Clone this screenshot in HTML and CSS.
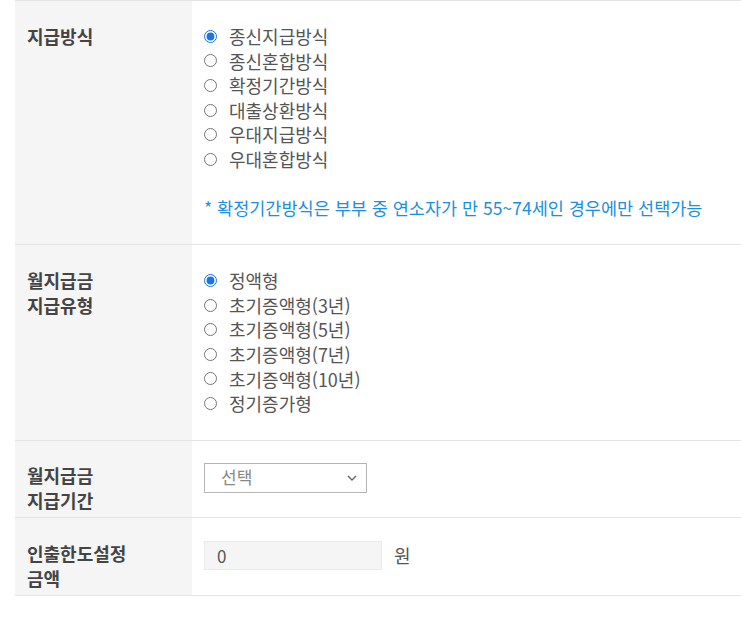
FILE: index.html
```html
<!DOCTYPE html>
<html lang="ko">
<head>
<meta charset="UTF-8" />
<title>연금 설정</title>
<link rel="stylesheet" href="styles.css">
</head>
<body>

<div class="form-table">
  <div class="row">
    <div class="label">지급방식</div>
    <div class="value">
      <ul class="radio-list">
        <li><label><input type="radio" name="method" checked> 종신지급방식</label></li>
        <li><label><input type="radio" name="method"> 종신혼합방식</label></li>
        <li><label><input type="radio" name="method"> 확정기간방식</label></li>
        <li><label><input type="radio" name="method"> 대출상환방식</label></li>
        <li><label><input type="radio" name="method"> 우대지급방식</label></li>
        <li><label><input type="radio" name="method"> 우대혼합방식</label></li>
      </ul>
      <p class="note">* 확정기간방식은 부부 중 연소자가 만 55~74세인 경우에만 선택가능</p>
    </div>
  </div>

  <div class="row">
    <div class="label">월지급금<br>지급유형</div>
    <div class="value">
      <ul class="radio-list">
        <li><label><input type="radio" name="type" checked> 정액형</label></li>
        <li><label><input type="radio" name="type"> 초기증액형(3년)</label></li>
        <li><label><input type="radio" name="type"> 초기증액형(5년)</label></li>
        <li><label><input type="radio" name="type"> 초기증액형(7년)</label></li>
        <li><label><input type="radio" name="type"> 초기증액형(10년)</label></li>
        <li><label><input type="radio" name="type"> 정기증가형</label></li>
      </ul>
    </div>
  </div>

  <div class="row compact">
    <div class="label">월지급금<br>지급기간</div>
    <div class="value">
      <div class="select-box">
        <span>선택</span>
        <svg width="10" height="6" viewBox="0 0 10 6"><path d="M1 1l4 4 4-4" fill="none" stroke="#666" stroke-width="1.4"/></svg>
      </div>
    </div>
  </div>

  <div class="row">
    <div class="label">인출한도설정<br>금액</div>
    <div class="value">
      <div class="amount">
        <input type="text" value="0" readonly>
        <span>원</span>
      </div>
    </div>
  </div>
</div>

</body>
</html>
```

FILE: styles.css
```css
body {
  margin: 0;
  background: #fff;
  font-family: "Noto Sans CJK KR", "Noto Sans", sans-serif;
  color: #555;
}

.form-table {
  margin-left: 15px;
  border-top: 1px solid #e4e4e4;
}
.row {
  display: grid;
  grid-template-columns: 177px 1fr;
  border-bottom: 1px solid #e4e4e4;
}
.label {
  background: #f5f5f5;
  padding: 23px 12px 4px;
  font-size: 18px;
  font-weight: bold;
  line-height: 25px;
  color: #444;
}
.value {
  padding: 23px 12px 4px;
  font-size: 18px;
  line-height: 24.6px;
}
.row.compact .label { padding-top: 22px; }
.row.compact .value { padding-top: 22px; }

.radio-list { list-style: none; margin: 0 0 20px; padding: 0; }
.radio-list label { display: flex; align-items: center; }
.radio-list input {
  width: 13px; height: 13px;
  margin: 0 12px 0 0;
  accent-color: #1a73e8;
}

.note {
  margin: 24px 0 20px;
  color: #1a8fe0;
  font-size: 17.5px;
}

.select-box {
  width: 163px; height: 30px;
  box-sizing: border-box;
  border: 1px solid #b5b5b5;
  display: flex; align-items: center; justify-content: space-between;
  padding: 0 9px 0 16px;
  color: #888;
  font-size: 17px;
  margin-bottom: 18px;
}

.amount { display: flex; align-items: center; gap: 12px; margin-bottom: 20px; }
.amount input {
  width: 178px; height: 29px;
  box-sizing: border-box;
  border: 1px solid #eaeaea;
  background: #f5f5f5;
  padding: 0 12px;
  font-family: inherit;
  font-size: 17px;
  color: #555;
  outline: none;
}
.amount span { font-size: 18px; color: #555; }
```
